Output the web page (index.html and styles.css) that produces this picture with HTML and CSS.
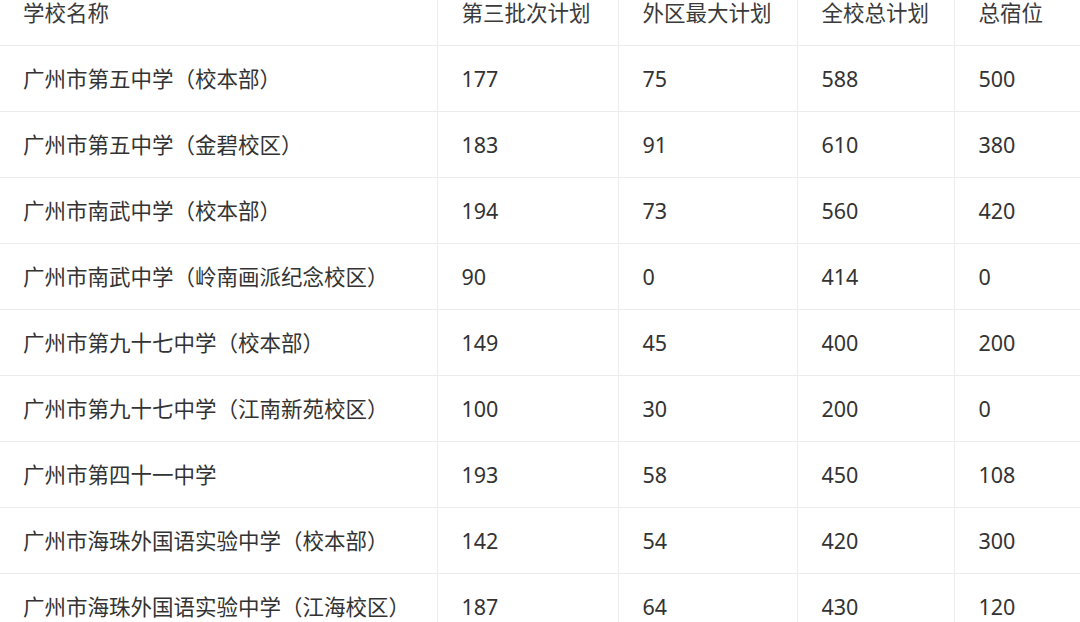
FILE: index.html
```html
<!DOCTYPE html>
<html lang="zh-CN">
<head>
<meta charset="utf-8">
<link rel="stylesheet" href="styles.css">
</head>
<body>
<table class="plan">
  <colgroup>
    <col class="c1"><col class="c2"><col class="c3"><col class="c4"><col class="c5">
  </colgroup>
  <thead>
    <tr><th>学校名称</th><th>第三批次计划</th><th>外区最大计划</th><th>全校总计划</th><th>总宿位</th></tr>
  </thead>
  <tbody>
    <tr><td>广州市第五中学（校本部）</td><td>177</td><td>75</td><td>588</td><td>500</td></tr>
    <tr><td>广州市第五中学（金碧校区）</td><td>183</td><td>91</td><td>610</td><td>380</td></tr>
    <tr><td>广州市南武中学（校本部）</td><td>194</td><td>73</td><td>560</td><td>420</td></tr>
    <tr><td>广州市南武中学（岭南画派纪念校区）</td><td>90</td><td>0</td><td>414</td><td>0</td></tr>
    <tr><td>广州市第九十七中学（校本部）</td><td>149</td><td>45</td><td>400</td><td>200</td></tr>
    <tr><td>广州市第九十七中学（江南新苑校区）</td><td>100</td><td>30</td><td>200</td><td>0</td></tr>
    <tr><td>广州市第四十一中学</td><td>193</td><td>58</td><td>450</td><td>108</td></tr>
    <tr><td>广州市海珠外国语实验中学（校本部）</td><td>142</td><td>54</td><td>420</td><td>300</td></tr>
    <tr><td>广州市海珠外国语实验中学（江海校区）</td><td>187</td><td>64</td><td>430</td><td>120</td></tr>
  </tbody>
</table>
</body>
</html>
```
FILE: styles.css
```css
html, body {
  margin: 0;
  padding: 0;
  background: #ffffff;
  overflow: hidden;
}
body {
  width: 1080px;
  height: 622px;
  font-family: "Noto Sans", "Noto Sans CJK SC", sans-serif;
  font-size: 21.5px;
  color: #333333;
}
.plan {
  width: 1080px;
  border-collapse: collapse;
  table-layout: fixed;
  margin-top: -20px;
}
.c1 { width: 437px; }
.c2 { width: 181px; }
.c3 { width: 179px; }
.c4 { width: 157px; }
.c5 { width: 126px; }
.plan th,
.plan td {
  height: 65px;
  padding: 0 0 0 24px;
  text-align: left;
  vertical-align: middle;
  font-weight: normal;
  line-height: 1;
  border-bottom: 1px solid #ececec;
  border-left: 1px solid #ececec;
  white-space: nowrap;
}
.plan th:first-child,
.plan td:first-child {
  border-left: none;
  padding-left: 23px;
}
.plan th {
  color: #3a3a3a;
}
```
